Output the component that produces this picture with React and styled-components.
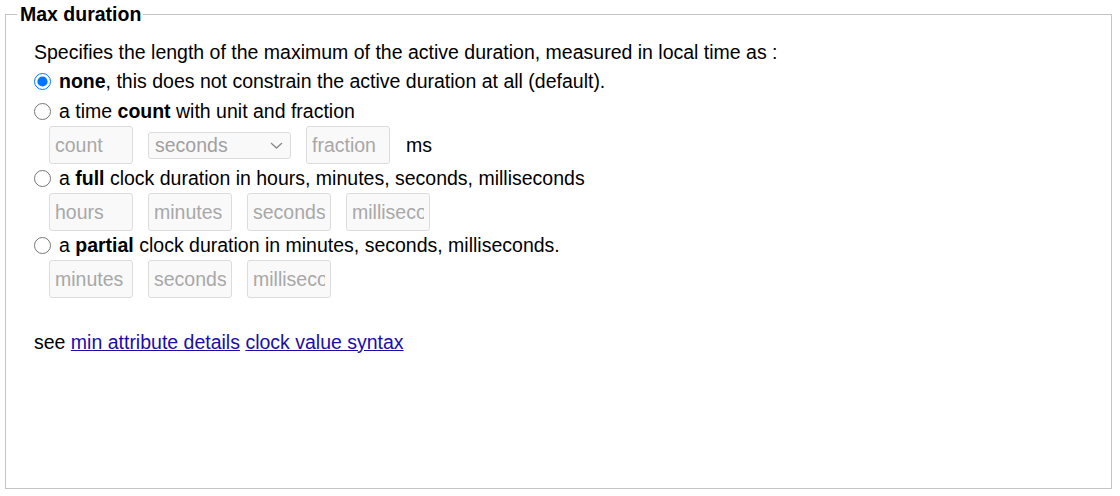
import { styled, createGlobalStyle } from "styled-components";

const GlobalStyle = createGlobalStyle`
  html, body {
    margin: 0;
    padding: 0;
    background: #ffffff;
  }
  body {
    font-family: "Liberation Sans", Arial, sans-serif;
    font-size: 19.5px;
    color: #000000;
  }
`;

const Page = styled.div`
  padding: 4px 8px 0 5px;
  height: 492px;
  box-sizing: border-box;
`;

// 전체 박스
const Box = styled.fieldset`
  margin: 0;
  padding: 0 0 0 11px;
  width: 1107px;
  height: 485px;
  box-sizing: border-box;
  border: 1px solid #c4c4c4;
  min-inline-size: 0;
`;

const Legend = styled.legend`
  font-weight: bold;
  font-size: 19.5px;
  padding: 0 2px 0 3px;
  line-height: 20px;
`;

const Content = styled.div`
  padding: 13px 0 0 17px;
  display: flex;
  flex-direction: column;
`;

const Line = styled.div`
  display: flex;
  align-items: center;
  height: ${(p) => p.$h || 29.5}px;
  white-space: nowrap;
`;

const Radio = styled.input.attrs({ type: "radio" })`
  width: 17px;
  height: 17px;
  margin: 0 8px 0 0;
  flex: none;
`;

const InputRow = styled.div`
  display: flex;
  align-items: center;
  gap: 15px;
  padding-left: 15px;
  height: 38px;
`;

const Field = styled.input`
  width: 84px;
  height: 38px;
  box-sizing: border-box;
  border: 1px solid #dcdcdc;
  border-radius: 3px;
  background: #f9f9f9;
  font-family: "Liberation Sans", Arial, sans-serif;
  font-size: 19.5px;
  padding: 0 5px;
  margin: 0;

  &::placeholder {
    color: #a8a8a8;
  }
`;

const SelectWrap = styled.span`
  position: relative;
  display: inline-flex;
  width: 143px;
  height: 27px;
`;

const Select = styled.select`
  appearance: none;
  width: 143px;
  height: 27px;
  box-sizing: border-box;
  border: 1px solid #dcdcdc;
  border-radius: 3px;
  background: #f9f9f9;
  color: #a0a0a0;
  font-family: "Liberation Sans", Arial, sans-serif;
  font-size: 19.5px;
  padding: 0 6px;
  margin: 0;
  opacity: 1;
`;

const Chevron = styled.svg`
  position: absolute;
  right: 8px;
  top: 10px;
  width: 13px;
  height: 7px;
  pointer-events: none;
`;

const Unit = styled.span`
  margin-left: 1px;
`;

const Link = styled.a`
  color: #1a0dab;
  text-decoration: underline;
`;

const Footer = styled(Line)`
  margin-top: 29px;
`;

export default function App() {
  return (
    <Page>
      <GlobalStyle />
      <Box>
        <Legend>Max duration</Legend>
        <Content>
          <Line $h={30}>
            Specifies the length of the maximum of the active duration, measured in local time as :
          </Line>
          <Line>
            <Radio name="max" defaultChecked />
            <span>
              <b>none</b>, this does not constrain the active duration at all (default).
            </span>
          </Line>
          <Line>
            <Radio name="max" />
            <span>
              a time <b>count</b> with unit and fraction
            </span>
          </Line>
          <InputRow>
            <Field disabled placeholder="count" />
            <SelectWrap>
              <Select disabled defaultValue="seconds">
                <option value="seconds">seconds</option>
              </Select>
              <Chevron viewBox="0 0 13 7">
                <path d="M1 1 L6.5 6 L12 1" fill="none" stroke="#8a8a8a" strokeWidth="1.3" />
              </Chevron>
            </SelectWrap>
            <Field disabled placeholder="fraction" />
            <Unit>ms</Unit>
          </InputRow>
          <Line $h={29}>
            <Radio name="max" />
            <span>
              a <b>full</b> clock duration in hours, minutes, seconds, milliseconds
            </span>
          </Line>
          <InputRow>
            <Field disabled placeholder="hours" />
            <Field disabled placeholder="minutes" />
            <Field disabled placeholder="seconds" />
            <Field disabled placeholder="milliseconds" />
          </InputRow>
          <Line $h={29}>
            <Radio name="max" />
            <span>
              a <b>partial</b> clock duration in minutes, seconds, milliseconds.
            </span>
          </Line>
          <InputRow>
            <Field disabled placeholder="minutes" />
            <Field disabled placeholder="seconds" />
            <Field disabled placeholder="milliseconds" />
          </InputRow>
          <Footer $h={30}>
            <span>
              see <Link href="#">min attribute details</Link>{" "}
              <Link href="#">clock value syntax</Link>
            </span>
          </Footer>
        </Content>
      </Box>
    </Page>
  );
}
